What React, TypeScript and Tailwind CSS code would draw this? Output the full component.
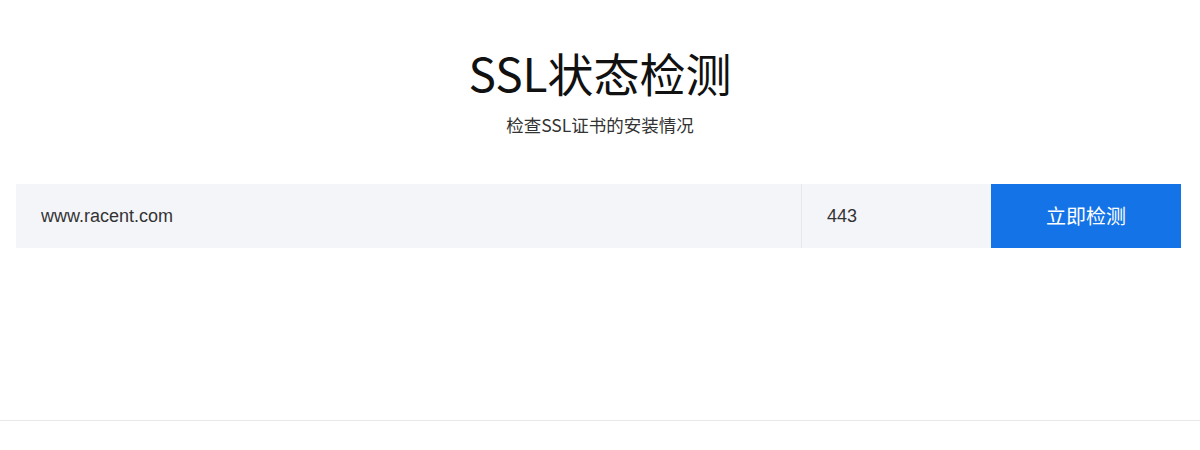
import React from "react";

export default function App() {
  return (
    <div className="w-[1200px] h-[450px] bg-white overflow-hidden" style={{ fontFamily: '"Noto Sans CJK SC", "Noto Sans", sans-serif' }}>
      <div className="h-[420px] flex flex-col items-center">
        <h1 className="mt-[42px] text-[46px] leading-[60px] text-[#111] font-normal">SSL状态检测</h1>
        <p className="mt-[11px] text-[17.5px] leading-[24px] text-[#333]">检查SSL证书的安装情况</p>
        <div className="mt-[47px] self-start ml-[16px] w-[1165px] h-[64px] flex">
          <input
            defaultValue="www.racent.com"
            className="flex-1 h-full bg-[#f4f5f9] pl-[25px] text-[18px] text-[#333] outline-none"
            style={{ fontFamily: '"Liberation Sans", Arial, sans-serif' }}
          />
          <input
            defaultValue="443"
            className="w-[190px] h-full bg-[#f4f5f9] border-l border-[#e6e8ee] pl-[25px] text-[18px] text-[#333] outline-none"
            style={{ fontFamily: '"Liberation Sans", Arial, sans-serif' }}
          />
          <button className="w-[190px] h-full bg-[#1473e6] text-white text-[20px]">立即检测</button>
        </div>
      </div>
      <div className="border-t border-[#e8e8e8]" />
    </div>
  );
}
